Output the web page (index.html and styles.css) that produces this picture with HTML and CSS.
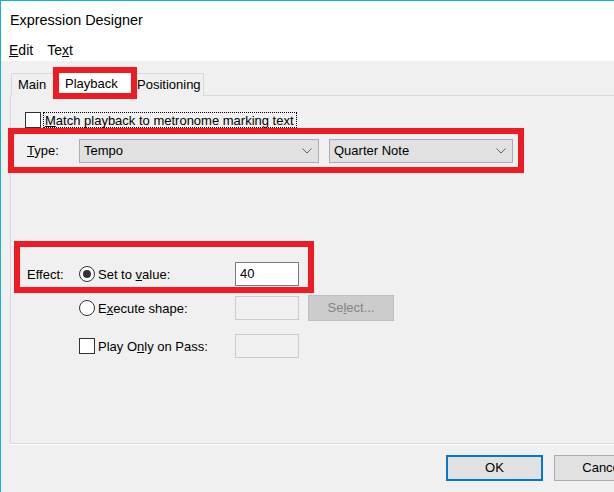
FILE: index.html
```html
<!DOCTYPE html>
<html lang="en">

<head>
    <meta charset="UTF-8">
    <title>Expression Designer</title>
    <link rel="stylesheet" href="styles.css">
</head>

<body>
    <div class="window">
        <div class="header">
            <div class="title">Expression Designer</div>
            <div class="menu">
                <span><u>E</u>dit</span>
                <span>Te<u>x</u>t</span>
            </div>
        </div>

        <div class="tabs">
            <div class="tab main">Main</div>
            <div class="tab active">Playback</div>
            <div class="tab pos">Positioning</div>
        </div>

        <div class="panel">
            <div class="checkRow">
                <span class="checkbox"></span>
                <span class="focus"><u>M</u>atch playback to metronome marking text</span>
            </div>

            <div class="mark typeBox">
                <span class="label"><u>T</u>ype:</span>
                <div class="combo first"><span>Tempo</span>
                    <svg width="10" height="6" viewBox="0 0 10 6"><path d="M0.5 0.5 L5 5 L9.5 0.5" fill="none" stroke="#606060" stroke-width="1"/></svg>
                </div>
                <div class="combo second"><span>Quarter Note</span>
                    <svg width="10" height="6" viewBox="0 0 10 6"><path d="M0.5 0.5 L5 5 L9.5 0.5" fill="none" stroke="#606060" stroke-width="1"/></svg>
                </div>
            </div>

            <div class="mark effectBox">
                <span class="label">Effect:</span>
                <span class="opt"><span class="radio on"></span><span>Set to <u>v</u>alue:</span></span>
                <span class="field">40</span>
            </div>

            <div class="options">
                <div class="optRow">
                    <span class="opt"><span class="radio"></span><span>E<u>x</u>ecute shape:</span></span>
                    <span class="field off"></span>
                    <span class="btn select">Se<u>l</u>ect...</span>
                </div>
                <div class="optRow">
                    <span class="opt"><span class="checkbox"></span><span>Play O<u>n</u>ly on Pass:</span></span>
                    <span class="field off"></span>
                </div>
            </div>
        </div>

        <div class="buttons">
            <span class="btn ok">OK</span>
            <span class="btn">Cancel</span>
        </div>
    </div>
</body>

</html>
```

FILE: styles.css
```css
body {
    margin: 0;
    width: 614px;
    height: 492px;
    overflow: hidden;
    font-family: "Liberation Sans", Arial, sans-serif;
    font-size: 13px;
    color: #000;
}

.window {
    height: 491px;
    background-color: #f0f0f0;
    border-top: 1px solid #17b3c8;
    border-left: 1px solid #17b3c8;
}

.header {
    height: 60px;
    background-color: #fff;
}

.title {
    height: 38px;
    line-height: 38px;
    padding-left: 9px;
    font-size: 14.4px;
}

.menu {
    display: flex;
    gap: 14px;
    height: 22px;
    line-height: 22px;
    padding-left: 8px;
    font-size: 14px;
}

.tabs {
    display: flex;
    align-items: flex-end;
    height: 25px;
    padding: 10px 0 0 10px;
}

.tab {
    height: 23px;
    line-height: 22px;
    box-sizing: border-box;
    border: 1px solid #d9d9d9;
    border-bottom: none;
    background-color: #f0f0f0;
}

.main {
    width: 45px;
    padding-left: 6px;
}

.pos {
    width: 72px;
    padding-left: 5px;
    border-left: none;
}

.tab.active {
    position: relative;
    z-index: 1;
    width: 76px;
    height: 25px;
    line-height: 24px;
    padding-left: 9px;
    background-color: #fff;
    border-left: none;
}

.tab.active::after {
    content: "";
    position: absolute;
    left: -3px;
    right: -6px;
    top: -5px;
    bottom: -3px;
    border: 6px solid #ed1c24;
}

.panel {
    height: 349px;
    box-sizing: border-box;
    margin: -1px 0 0 9px;
    width: 640px;
    padding-top: 16px;
    border: 1px solid #d9d9d9;
    box-shadow: 0 1px 0 #fff;
}

.checkRow {
    display: flex;
    align-items: center;
    height: 16px;
    padding-left: 14px;
}

.checkbox {
    display: inline-block;
    width: 16px;
    height: 16px;
    box-sizing: border-box;
    border: 1px solid #333;
    background-color: #fff;
    flex-shrink: 0;
}

.focus {
    margin-left: 2px;
    height: 16px;
    line-height: 15px;
    padding: 0 2px 0 1px;
    box-sizing: border-box;
    border: 1px dotted #000;
}

.mark {
    border: 6px solid #ed1c24;
    box-sizing: border-box;
    display: flex;
    align-items: center;
}

.typeBox {
    width: 516px;
    height: 45px;
    margin-left: -3px;
    padding-left: 13px;
}

.label {
    width: 52px;
    flex-shrink: 0;
}

.combo {
    display: flex;
    align-items: center;
    justify-content: space-between;
    height: 24px;
    box-sizing: border-box;
    padding: 0 6px 0 4px;
    border: 1px solid #adadad;
    background-color: #e1e1e1;
}

.combo.first {
    width: 240px;
}

.combo.second {
    width: 184px;
    margin-left: 10px;
}

.effectBox {
    width: 300px;
    height: 52px;
    margin: 68px 0 0 3px;
    padding: 15px 0 1px 7px;
}

.opt {
    display: flex;
    align-items: center;
    gap: 3px;
    width: 156px;
    flex-shrink: 0;
}

.radio {
    display: inline-block;
    width: 16px;
    height: 16px;
    box-sizing: border-box;
    border: 1px solid #333;
    border-radius: 50%;
    background-color: #fff;
    position: relative;
}

.radio.on::after {
    content: "";
    position: absolute;
    left: 3px;
    top: 3px;
    width: 8px;
    height: 8px;
    border-radius: 50%;
    background-color: #333;
}

.field {
    width: 64px;
    height: 24px;
    box-sizing: border-box;
    line-height: 22px;
    padding-left: 4px;
    border: 1px solid #7a7a7a;
    background-color: #fff;
}

.field.off {
    border-color: #cccccc;
    background-color: #f0f0f0;
}

.options {
    margin-top: 2px;
    padding-left: 68px;
    display: flex;
    flex-direction: column;
    gap: 12px;
}

.optRow {
    display: flex;
    align-items: center;
    height: 26px;
}

.btn {
    display: inline-block;
    width: 97px;
    height: 26px;
    line-height: 24px;
    box-sizing: border-box;
    text-align: center;
    border: 1px solid #adadad;
    background-color: #e1e1e1;
}

.btn.select {
    width: 86px;
    margin-left: 9px;
    color: #838383;
    border-color: #bfbfbf;
    background-color: #cccccc;
}

.buttons {
    display: flex;
    gap: 11px;
    margin: 11px 0 0 445px;
    width: 300px;
}

.btn.ok {
    border: 2px solid #0078d7;
    line-height: 22px;
}
```
